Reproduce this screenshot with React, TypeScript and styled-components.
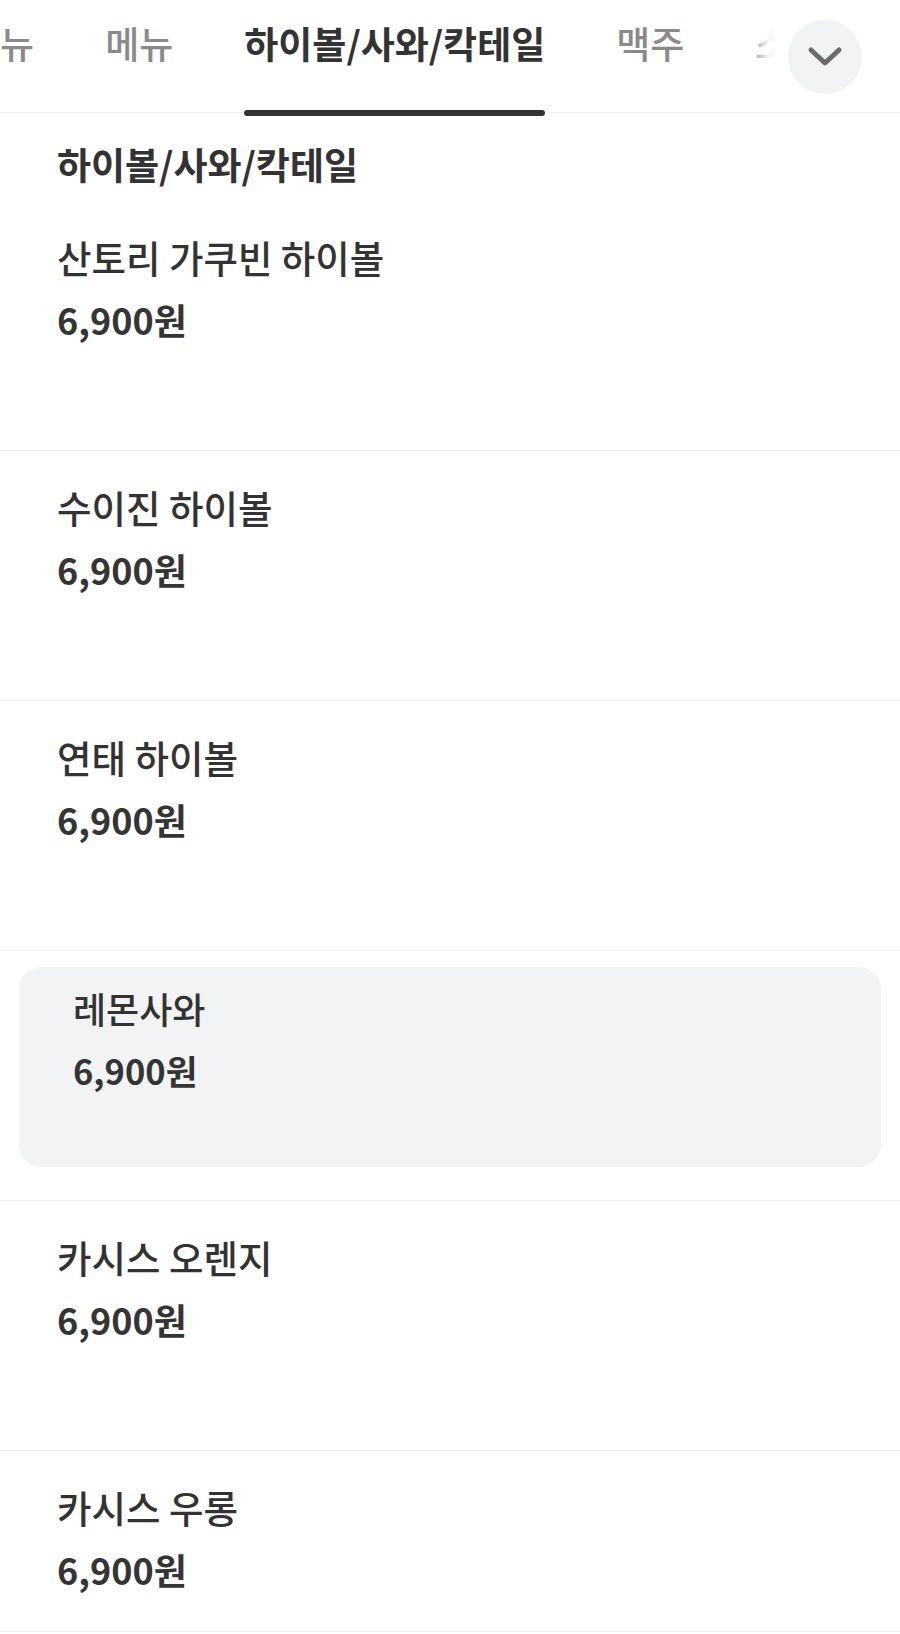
import React from "react";
import styled, { createGlobalStyle } from "styled-components";

const GlobalStyle = createGlobalStyle`
  * { box-sizing: border-box; }
  body {
    margin: 0;
    background: #fff;
    font-family: "Noto Sans CJK KR", "Noto Sans", sans-serif;
    color: #333;
  }
`;

interface MenuItem {
  name: string;
  price: string;
  pressed?: boolean;
}

const tabs = ["대표메뉴", "메뉴", "하이볼/사와/칵테일", "맥주", "소주"];
const activeTab = 2;

const items: MenuItem[] = [
  { name: "산토리 가쿠빈 하이볼", price: "6,900원" },
  { name: "수이진 하이볼", price: "6,900원" },
  { name: "연태 하이볼", price: "6,900원" },
  { name: "레몬사와", price: "6,900원", pressed: true },
  { name: "카시스 오렌지", price: "6,900원" },
  { name: "카시스 우롱", price: "6,900원" },
];

const Page = styled.div`
  width: 900px;
  height: 1634px;
  overflow: hidden;
  background: #fff;
`;

const TabBar = styled.div`
  position: relative;
  height: 113px;
  border-bottom: 1px solid #efefef;
`;

const TabViewport = styled.div`
  height: 100%;
  overflow-x: clip;
`;

const TabTrack = styled.div`
  display: flex;
  gap: 61px;
  margin-left: -107px;
  height: 100%;
`;

const Tab = styled.div<{ $active?: boolean }>`
  display: flex;
  flex-direction: column;
  flex-shrink: 0;
  height: 100%;
  padding: 0 5px;
  font-size: 37px;
  font-weight: ${(p) => (p.$active ? 700 : 500)};
  color: ${(p) => (p.$active ? "#333" : "#8a8a8a")};
`;

const TabLabel = styled.span`
  line-height: 50px;
  margin-top: 18px;
  white-space: nowrap;
`;

const Indicator = styled.div<{ $active?: boolean }>`
  margin-top: auto;
  margin-bottom: -4px;
  height: 6px;
  border-radius: 3px;
  background: ${(p) => (p.$active ? "#333" : "transparent")};
`;

const Fade = styled.div`
  position: absolute;
  top: 0;
  right: 0;
  width: 150px;
  height: 110px;
  display: flex;
  align-items: center;
  justify-content: flex-end;
  padding-right: 38px;
  background: linear-gradient(to right, rgba(255, 255, 255, 0) 0, rgba(255, 255, 255, 0.92) 18px, #fff 28px);
`;

const ChevronButton = styled.div`
  width: 74px;
  height: 74px;
  margin-top: 4px;
  border-radius: 50%;
  background: #f2f3f5;
  display: flex;
  align-items: center;
  justify-content: center;
`;

const SectionTitle = styled.h2`
  margin: 0;
  padding: 26px 0 12px 57px;
  font-size: 37px;
  line-height: 50px;
  font-weight: 700;
  color: #333;
`;

const Row = styled.div<{ $pressed?: boolean; $last?: boolean }>`
  height: ${(p) => (p.$last ? "181px" : "250px")};
  border-bottom: 1px solid #efefef;
  padding: ${(p) => (p.$pressed ? "16px 19px 33px" : "0")};
`;

const Card = styled.div<{ $pressed?: boolean }>`
  height: 100%;
  border-radius: ${(p) => (p.$pressed ? "22px" : "0")};
  background: ${(p) => (p.$pressed ? "#f2f3f5" : "transparent")};
  padding: ${(p) => (p.$pressed ? "16px 54px" : "31px 57px")};
  display: flex;
  flex-direction: column;
`;

const Name = styled.div<{ $pressed?: boolean }>`
  font-size: ${(p) => (p.$pressed ? "36px" : "37.5px")};
  line-height: 50px;
  font-weight: 500;
  color: #333;
`;

const Price = styled.div<{ $pressed?: boolean }>`
  margin-top: 12px;
  font-size: ${(p) => (p.$pressed ? "34.5px" : "36px")};
  line-height: 50px;
  font-weight: 700;
  color: #353535;
`;

const ChevronDown = () => (
  <svg width="36" height="22" viewBox="0 0 36 22" fill="none">
    <path
      d="M4 4 L18 17 L32 4"
      stroke="#6b6b6b"
      strokeWidth="5"
      strokeLinecap="round"
      strokeLinejoin="round"
    />
  </svg>
);

export default function App() {
  return (
    <Page>
      <GlobalStyle />
      <TabBar>
        <TabViewport>
          <TabTrack>
            {tabs.map((t, i) => (
              <Tab key={t} $active={i === activeTab}>
                <TabLabel>{t}</TabLabel>
                <Indicator $active={i === activeTab} />
              </Tab>
            ))}
          </TabTrack>
        </TabViewport>
        <Fade>
          <ChevronButton>
            <ChevronDown />
          </ChevronButton>
        </Fade>
      </TabBar>
      <SectionTitle>하이볼/사와/칵테일</SectionTitle>
      {items.map((item, i) => (
        <Row key={item.name} $pressed={item.pressed} $last={i === items.length - 1}>
          <Card $pressed={item.pressed}>
            <Name $pressed={item.pressed}>{item.name}</Name>
            <Price $pressed={item.pressed}>{item.price}</Price>
          </Card>
        </Row>
      ))}
    </Page>
  );
}
